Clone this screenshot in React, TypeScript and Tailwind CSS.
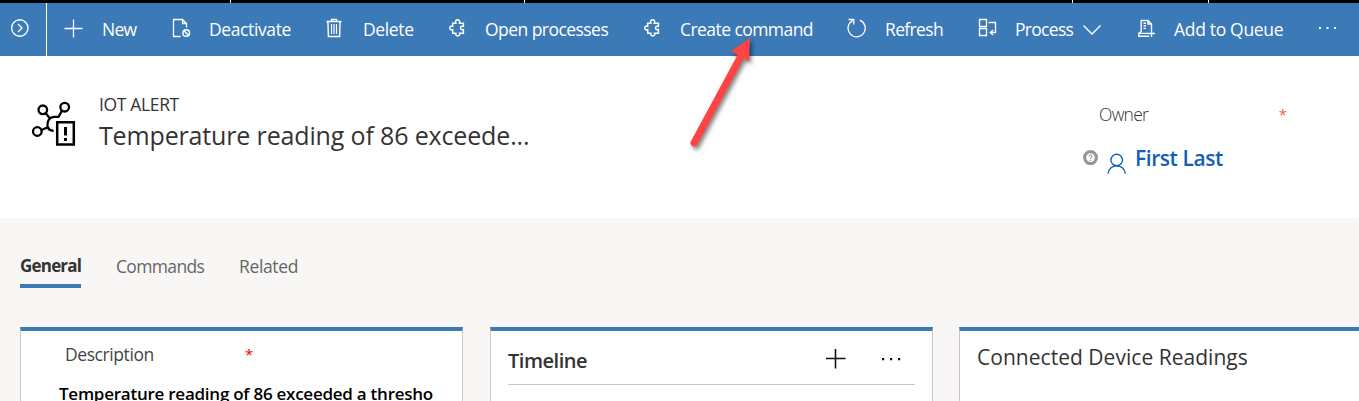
import type { ReactNode } from "react";

function Icon({ children, className = "" }: { children: ReactNode; className?: string }) {
  return (
    <svg
      viewBox="0 0 20 20"
      width="20"
      height="20"
      fill="none"
      stroke="currentColor"
      strokeWidth="1.2"
      className={`shrink-0 ${className}`}
    >
      {children}
    </svg>
  );
}

const PlusIcon = () => (
  <Icon>
    <path d="M0.5 10.5H18.5M9.5 1.5V19.5" strokeWidth="1.3" />
  </Icon>
);

const DeactivateIcon = () => (
  <Icon>
    <path d="M8.5 18.5H1.5V1.5H10.5L14.5 5.5V9.5M10.5 1.5V5.5H14.5" strokeWidth="1.3" />
    <circle cx="14.2" cy="15" r="3.3" strokeWidth="1.5" />
    <path d="M12 12.8L16.4 17.2" strokeWidth="1.5" />
  </Icon>
);

const DeleteIcon = () => (
  <Icon>
    <path d="M0.5 3.5H15.5M5.5 3.5V1.5H10.5V3.5M1.9 3.5L2.4 18.5H13.6L14.1 3.5" strokeWidth="1.4" />
    <path d="M5.5 6V16M8 6V16M10.5 6V16" />
  </Icon>
);

const PuzzleIcon = () => (
  <Icon>
    <path
      d="M3.7 5.2H6.8C6.2 3 7 1.8 8.6 1.8C10.2 1.8 11.2 3 10.4 5.2H14.4V8.3C12.4 7.8 11.6 8.6 11.6 9.9C11.6 11.2 12.4 12 14.4 11.5V15.2H10.6C11.2 16.8 10.2 17.9 8.7 17.9C7.2 17.9 6.3 16.8 6.8 15.2H3.7V11.7C1.9 12.2 0.8 11.3 0.8 9.9C0.8 8.5 1.9 7.7 3.7 8.2Z"
      strokeWidth="1.5"
    />
  </Icon>
);

const RefreshIcon = () => (
  <Icon>
    <path d="M12.8 2.2A8.6 8.6 0 1 1 5.6 2.6M1.5 1.5H6.8V6.4" strokeWidth="1.3" />
  </Icon>
);

const ProcessIcon = () => (
  <Icon>
    <path d="M1.5 1.5H8.5V8.5H1.5ZM1.5 10.5H8.5V17.5H1.5ZM10.5 4.5H17.5V14.5H12.5M15 12L12.3 14.5L15 17" strokeWidth="1.3" />
  </Icon>
);

const QueueIcon = () => (
  <Icon>
    <path d="M3.2 14V2.5H10L13.5 6V12M10 2.5V6H13.5M5.5 5.2H8M5.5 7.8H8M5.5 10.4H8M3.2 13.5L0.8 15.4V18.2H11M0.8 15.4H11M13.5 12V19M10.5 15.5H17" strokeWidth="1.4" />
  </Icon>
);

function Command({ icon, label, className }: { icon: ReactNode; label: string; className: string }) {
  return (
    <button className={`flex h-full shrink-0 items-center ${className}`}>
      <span className="-mt-1">{icon}</span>
      <span className="-mt-0.5">{label}</span>
    </button>
  );
}

function CommandBar() {
  return (
    <nav className="flex h-[53px] items-center whitespace-nowrap bg-[#3b79b7] text-[17.5px] leading-5 text-white">
      <div className="flex h-full w-[47px] shrink-0 items-center border-r border-white pl-[10px]">
        <Icon className="-mt-1">
          <circle cx="9.8" cy="10" r="8.2" strokeWidth="1.4" />
          <path d="M8 6L12 10L8 14" strokeWidth="1.4" />
        </Icon>
      </div>
      <Command icon={<PlusIcon />} label="New" className="ml-[17px] w-[108px] gap-[18px] tracking-[-0.75px]" />
      <Command icon={<DeactivateIcon />} label="Deactivate" className="w-[154px] gap-[17px] tracking-[-0.38px]" />
      <Command icon={<DeleteIcon />} label="Delete" className="w-[123px] gap-[17px] tracking-[-0.36px]" />
      <Command icon={<PuzzleIcon />} label="Open processes" className="w-[195px] gap-[16px] tracking-[-0.55px]" />
      <Command icon={<PuzzleIcon />} label="Create command" className="w-[203px] gap-[16px] tracking-[-0.56px]" />
      <Command icon={<RefreshIcon />} label="Refresh" className="w-[131px] gap-[18px] tracking-[-0.65px]" />
      <Command icon={<ProcessIcon />} label="Process" className="w-[97px] gap-[17px] tracking-[-0.7px]" />
      <svg viewBox="0 0 20 12" width="20" height="12" fill="none" stroke="currentColor" strokeWidth="1.4" className="ml-[7px] shrink-0">
        <path d="M1.5 1.5L10 10L18.5 1.5" />
      </svg>
      <Command icon={<QueueIcon />} label="Add to Queue" className="ml-[36px] w-[180px] gap-[16px] tracking-[-0.32px]" />
      <svg viewBox="0 0 20 4" width="20" height="4" fill="currentColor" className="-mt-1 shrink-0">
        <path d="M1 1H3V3H1ZM8.5 1H10.5V3H8.5ZM16 1H18V3H16Z" />
      </svg>
    </nav>
  );
}

function IotAlertIcon() {
  return (
    <svg viewBox="0 0 46 46" width="46" height="46" fill="none" stroke="#000" strokeWidth="2.3" className="shrink-0">
      <circle cx="10.8" cy="8.8" r="4.3" />
      <circle cx="32.7" cy="6.2" r="4.3" />
      <circle cx="5.3" cy="30.5" r="4.3" />
      <path d="M13.5 12L17.8 17.3M30 9.6L26.5 15.8H22C17 16.3 15 20.5 15.5 25C16 28.5 18.1 29.6 21.7 29.8M9.5 29L16.3 26" />
      <path d="M25.2 21.2H41.8V43.6H25.2Z" fill="#fff" strokeWidth="2.5" />
      <path d="M33.5 26V34.5M33.5 37V40" strokeWidth="3" />
    </svg>
  );
}

function RecordHeader() {
  return (
    <header className="flex h-[162px] bg-white">
      <div className="pl-8 pt-[45px]">
        <IotAlertIcon />
      </div>
      <div className="w-[1004px] pl-[21px] pt-[38px] text-[#333]">
        <p className="text-[17.5px] leading-5 tracking-[-0.35px]">IOT ALERT</p>
        <h1 className="mt-1 text-[25px] leading-[34px] tracking-[-0.15px]">Temperature reading of 86 exceede...</h1>
      </div>
      <div className="w-[277px] pt-[48px]">
        <div className="flex justify-between pl-[17px] pr-[72px] text-[17.5px] leading-5">
          <span className="font-light tracking-[-0.74px] text-[#333]">Owner</span>
          <span className="text-[15px] text-[#f2604b]">*</span>
        </div>
        <div className="mt-5 flex">
          <svg viewBox="0 0 16 16" width="16" height="16" fill="none" className="mt-[6px] shrink-0">
            <circle cx="8.5" cy="7.6" r="5.9" stroke="#979797" strokeWidth="3.2" />
            <path d="M7 6.2C7.1 4.5 10.1 4.6 9.9 6.3C9.8 7.3 8.5 7.2 8.5 8.6M8.5 9.6V10.8" stroke="#777" strokeWidth="1" />
          </svg>
          <svg viewBox="0 0 20 22" width="20" height="22" fill="none" stroke="#1160b7" strokeWidth="1.4" className="ml-[9px] mt-[9px] shrink-0">
            <circle cx="9.7" cy="7" r="5.8" />
            <path d="M1.2 20.8C1.8 10.2 17.6 10.2 18.2 20.8" />
          </svg>
          <a className="ml-[8px] whitespace-nowrap text-[21px] font-semibold leading-7 tracking-[-0.43px] text-[#1160b7]">First Last</a>
        </div>
      </div>
    </header>
  );
}

function Tabs() {
  return (
    <div className="flex h-[109px] pl-5 pt-[38px] text-[17.5px] leading-5 text-[#666]">
      <span className="h-8 w-[61px] whitespace-nowrap border-b-4 border-[#3b79b7] text-[17px] font-bold tracking-[-0.8px] text-[#333]">General</span>
      <span className="ml-[35px] w-[88px] whitespace-nowrap tracking-[-0.66px]">Commands</span>
      <span className="ml-[35px] whitespace-nowrap tracking-[-0.35px]">Related</span>
    </div>
  );
}

function Card({ children, className = "" }: { children: ReactNode; className?: string }) {
  return (
    <section className={`h-[74px] w-[443px] shrink-0 border-x border-t-4 border-x-[#c8c8c8] border-t-[#3b79b7] bg-white ${className}`}>
      {children}
    </section>
  );
}

function Cards() {
  return (
    <main className="flex overflow-hidden pl-5">
      <Card>
        <div className="flex pl-[44px] pt-[13px] text-[17.5px] leading-5">
          <span className="w-[180px] tracking-[-0.42px] text-[#444]">Description</span>
          <span className="text-[15px] text-[#e00]">*</span>
        </div>
        <p className="ml-[38px] mt-[20px] whitespace-nowrap text-[17px] font-semibold leading-5 tracking-[-0.25px] text-black">
          Temperature reading of 86 exceeded a thresho
        </p>
      </Card>
      <Card className="ml-[27px] px-[17px]">
        <div className="flex h-[54px] items-start border-b border-[#c8c8c8] pt-4">
          <h2 className="flex-1 text-[20px] font-semibold leading-7 tracking-[-0.48px] text-[#333]">Timeline</h2>
          <svg viewBox="0 0 20 20" width="20" height="20" stroke="#111" strokeWidth="1.6" className="mr-[35px] mt-0.5">
            <path d="M-0.5 9.5H19.5M9.5 -0.5V19.5" />
          </svg>
          <svg viewBox="0 0 20 4" width="20" height="4" fill="#111" className="mr-[14px] mt-[10px]">
            <path d="M1 1H3.2V3.2H1ZM9 1H11.2V3.2H9ZM17 1H19.2V3.2H17Z" />
          </svg>
        </div>
      </Card>
      <Card className="ml-[26px] pl-[17px] pt-3">
        <h2 className="whitespace-nowrap text-[21px] leading-7 tracking-[0.03px] text-[#333]">Connected Device Readings</h2>
      </Card>
    </main>
  );
}

function PointerArrow() {
  return (
    <svg
      viewBox="0 0 80 130"
      width="80"
      height="130"
      className="pointer-events-none absolute left-[680px] top-[30px] drop-shadow-[2px_3px_2px_rgba(0,0,0,0.5)]"
    >
      <path d="M14 113L61 26" stroke="#ff4343" strokeWidth="7" strokeLinecap="round" />
      <path d="M70 8L51 21.5L69 31Z" fill="#ff4343" />
    </svg>
  );
}

export default function App() {
  return (
    <div className="relative h-[401px] w-[1359px] overflow-hidden bg-[#f8f7f5] font-['Open_Sans',sans-serif]">
      <div className="flex h-[3px] bg-black">
        <i className="w-[231px] border-r border-white" />
        <i className="w-[294px] border-r border-white" />
        <i className="w-[548px] border-r border-white" />
        <i className="w-[136px] border-r border-white" />
      </div>
      <CommandBar />
      <RecordHeader />
      <Tabs />
      <Cards />
      <PointerArrow />
    </div>
  );
}
